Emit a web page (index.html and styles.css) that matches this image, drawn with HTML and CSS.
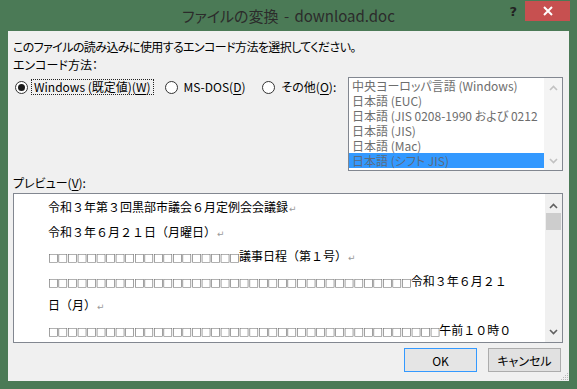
FILE: index.html
```html
<!DOCTYPE html>
<html lang="ja">
<head>
<meta charset="utf-8">
<title>ファイルの変換</title>
<link rel="stylesheet" href="styles.css">
</head>
<body>
<div class="window">
  <header class="titlebar">
    <div class="tb-side"></div>
    <div class="title">ファイルの変換 - download.doc</div>
    <div class="tb-side caption-buttons">
      <span class="help">?</span>
      <span class="close"><svg width="10" height="10" viewBox="0 0 10 10"><path d="M1 1 L9 9 M9 1 L1 9" stroke="#fff" stroke-width="2"/></svg></span>
    </div>
  </header>
  <main class="content">
    <p class="intro">このファイルの読み込みに使用するエンコード方法を選択してください。</p>
    <div class="encoding">
      <div class="enc-left">
        <div class="label">エンコード方法：</div>
        <div class="radios">
          <div class="radio checked"><span class="circle"></span><span class="rlabel focus">Windows (既定値)(<u>W</u>)</span></div>
          <div class="radio wide"><span class="circle"></span><span class="rlabel">MS-DOS(<u>D</u>)</span></div>
          <div class="radio"><span class="circle"></span><span class="rlabel">その他(<u>O</u>):</span></div>
        </div>
      </div>
      <div class="listbox">
        <ul class="items">
          <li>中央ヨーロッパ言語 (Windows)</li>
          <li>日本語 (EUC)</li>
          <li>日本語 (JIS 0208-1990 および 0212</li>
          <li>日本語 (JIS)</li>
          <li>日本語 (Mac)</li>
          <li class="selected">日本語 (シフト JIS)</li>
        </ul>
        <div class="vscroll disabled">
          <svg width="9" height="6" viewBox="0 0 9 6"><path d="M1 5 L4.5 1.5 L8 5" fill="none" stroke="#c2c2c2" stroke-width="1.6"/></svg>
          <svg width="9" height="6" viewBox="0 0 9 6"><path d="M1 1 L4.5 4.5 L8 1" fill="none" stroke="#c2c2c2" stroke-width="1.6"/></svg>
        </div>
      </div>
    </div>
    <div class="label preview-label">プレビュー(<u>V</u>):</div>
    <div class="preview">
      <div class="doc">
        <div class="line">令和３年第３回黒部市議会６月定例会会議録<span class="pm">↵</span></div>
        <div class="line">令和３年６月２１日（月曜日）<span class="pm">↵</span></div>
        <div class="line"><span class="bx">□□□□□□□□□□□□□□□□□□□□</span>議事日程（第１号）<span class="pm">↵</span></div>
        <div class="line"><span class="bx">□□□□□□□□□□□□□□□□□□□□□□□□□□□□□□□□□□□□□□</span>令和３年６月２１</div>
        <div class="line">日（月）<span class="pm">↵</span></div>
        <div class="line"><span class="bx">□□□□□□□□□□□□□□□□□□□□□□□□□□□□□□□□□□□□□□□□□</span>午前１０時０</div>
      </div>
      <div class="vscroll">
        <svg width="9" height="6" viewBox="0 0 9 6"><path d="M1 5 L4.5 1.5 L8 5" fill="none" stroke="#606060" stroke-width="1.6"/></svg>
        <span class="thumb"></span>
        <span class="track"></span>
        <svg width="9" height="6" viewBox="0 0 9 6"><path d="M1 1 L4.5 4.5 L8 1" fill="none" stroke="#606060" stroke-width="1.6"/></svg>
      </div>
    </div>
    <div class="buttons">
      <button class="btn default">OK</button>
      <button class="btn">キャンセル</button>
    </div>
    <svg class="grip" width="9" height="9" viewBox="0 0 9 9">
      <g fill="#b8b8b8">
        <rect x="7" y="1" width="1" height="1"/>
        <rect x="5" y="3" width="1" height="1"/><rect x="7" y="3" width="1" height="1"/>
        <rect x="3" y="5" width="1" height="1"/><rect x="5" y="5" width="1" height="1"/><rect x="7" y="5" width="1" height="1"/>
        <rect x="1" y="7" width="1" height="1"/><rect x="3" y="7" width="1" height="1"/><rect x="5" y="7" width="1" height="1"/><rect x="7" y="7" width="1" height="1"/>
      </g>
    </svg>
  </main>
</div>
</body>
</html>
```
FILE: styles.css
```css
* { box-sizing: border-box; }
html, body { margin: 0; padding: 0; }
body {
  width: 577px;
  height: 389px;
  overflow: hidden;
  font-family: "Noto Sans CJK JP", "Open Sans", sans-serif;
  font-size: 12px;
  color: #000;
}
.window {
  width: 577px;
  height: 389px;
  background: #4b7a56;
  display: flex;
  flex-direction: column;
}
.titlebar {
  height: 31px;
  display: grid;
  grid-template-columns: 1fr auto 1fr;
}
.title {
  font-size: 15px;
  color: #2b2b2b;
  line-height: 20px;
  padding-top: 6px;
  font-feature-settings: "palt";
  white-space: nowrap;
  word-spacing: 2px;
}
.caption-buttons {
  display: flex;
  justify-content: flex-end;
  align-items: flex-start;
  padding-right: 7px;
}
.help {
  font-family: "DejaVu Sans", sans-serif;
  font-weight: bold;
  font-size: 13px;
  color: #222;
  line-height: 16px;
  margin-top: 4px;
  margin-right: 8px;
}
.close {
  width: 45px;
  height: 20px;
  margin-top: 1px;
  background: #c75050;
  display: flex;
  align-items: center;
  justify-content: center;
}
.content {
  flex: 1;
  margin: 0 8px 8px;
  background: #f0f0f0;
  padding: 7px 6px 0 5px;
  position: relative;
  font-feature-settings: "palt";
}
.intro {
  margin: 0 0 1px;
  line-height: 17px;
  white-space: nowrap;
  letter-spacing: -0.6px;
}
.label {
  line-height: 18px;
  white-space: nowrap;
}
.encoding {
  display: flex;
  justify-content: space-between;
  align-items: flex-start;
}
.radios {
  display: flex;
  align-items: center;
  margin-top: 4px;
  height: 18px;
  padding-left: 2px;
}
.radio {
  display: flex;
  align-items: center;
  margin-right: 11px;
}
.radio.wide { margin-right: 14px; }
.radio:last-child { margin-right: 0; }
.circle {
  width: 13px;
  height: 13px;
  border: 1px solid #333;
  border-radius: 50%;
  background: #fff;
  display: flex;
  align-items: center;
  justify-content: center;
}
.radio.checked .circle::after {
  content: "";
  width: 7px;
  height: 7px;
  border-radius: 50%;
  background: #1a1a1a;
}
.rlabel {
  margin-left: 3px;
  padding: 0 2px;
  line-height: 14px;
  border: 1px solid transparent;
  white-space: nowrap;
}
.rlabel.focus { border: 1px dotted #222; }
.listbox {
  margin-top: 21px;
  width: 215px;
  height: 94px;
  border: 1px solid #828790;
  background: #fff;
  display: flex;
}
.items {
  list-style: none;
  margin: 0;
  padding: 0;
  flex: 1;
  min-width: 0;
  overflow: hidden;
}
.items li {
  height: 15px;
  line-height: 15px;
  padding-left: 3px;
  color: #6d6d6d;
  white-space: nowrap;
}
.items li.selected { background: #3399ff; color: #5b6b80; }
.vscroll {
  width: 18px;
  background: #f4f4f4;
  display: flex;
  flex-direction: column;
  align-items: center;
  justify-content: space-between;
  padding: 7px 0 6px;
}
.preview-label { margin-top: 3px; }
.preview {
  margin-top: 1px;
  height: 150px;
  border: 1px solid #828790;
  background: #fff;
  display: flex;
}
.doc {
  flex: 1;
  padding: 1px 0 0 34px;
  font-feature-settings: normal;
  overflow: hidden;
}
.line {
  line-height: 24.5px;
  height: 24.5px;
  white-space: nowrap;
}
.bx {
  display: inline-block;
  will-change: transform;
  font-family: "DejaVu Sans", sans-serif;
  font-size: 11px;
  color: #6a6a6a;
  letter-spacing: -0.85px;
}
.pm {
  font-family: "DejaVu Sans", sans-serif;
  font-size: 9px;
  color: #9a9a9a;
  margin-left: 1px;
}
.preview .vscroll {
  width: 17px;
  background: #f0f0f0;
  justify-content: flex-start;
  padding: 9px 0 7px;
}
.thumb {
  width: 15px;
  height: 17px;
  background: #cdcdcd;
  margin-top: 4px;
}
.track { flex: 1; }
.buttons {
  display: flex;
  justify-content: flex-end;
  gap: 11px;
  margin-top: 5px;
  padding-right: 2px;
}
.btn {
  width: 73px;
  height: 24px;
  border: 1px solid #acacac;
  background: #e1e1e1;
  font-family: "Noto Sans CJK JP", sans-serif;
  font-size: 12px;
  color: #000;
  padding: 0;
  font-feature-settings: "palt";
}
.btn.default { border-color: #3399ff; background: #e5e5e5; }
.grip {
  position: absolute;
  right: 0;
  bottom: 0;
}
u { text-decoration: underline; text-underline-offset: 2px; }
```
